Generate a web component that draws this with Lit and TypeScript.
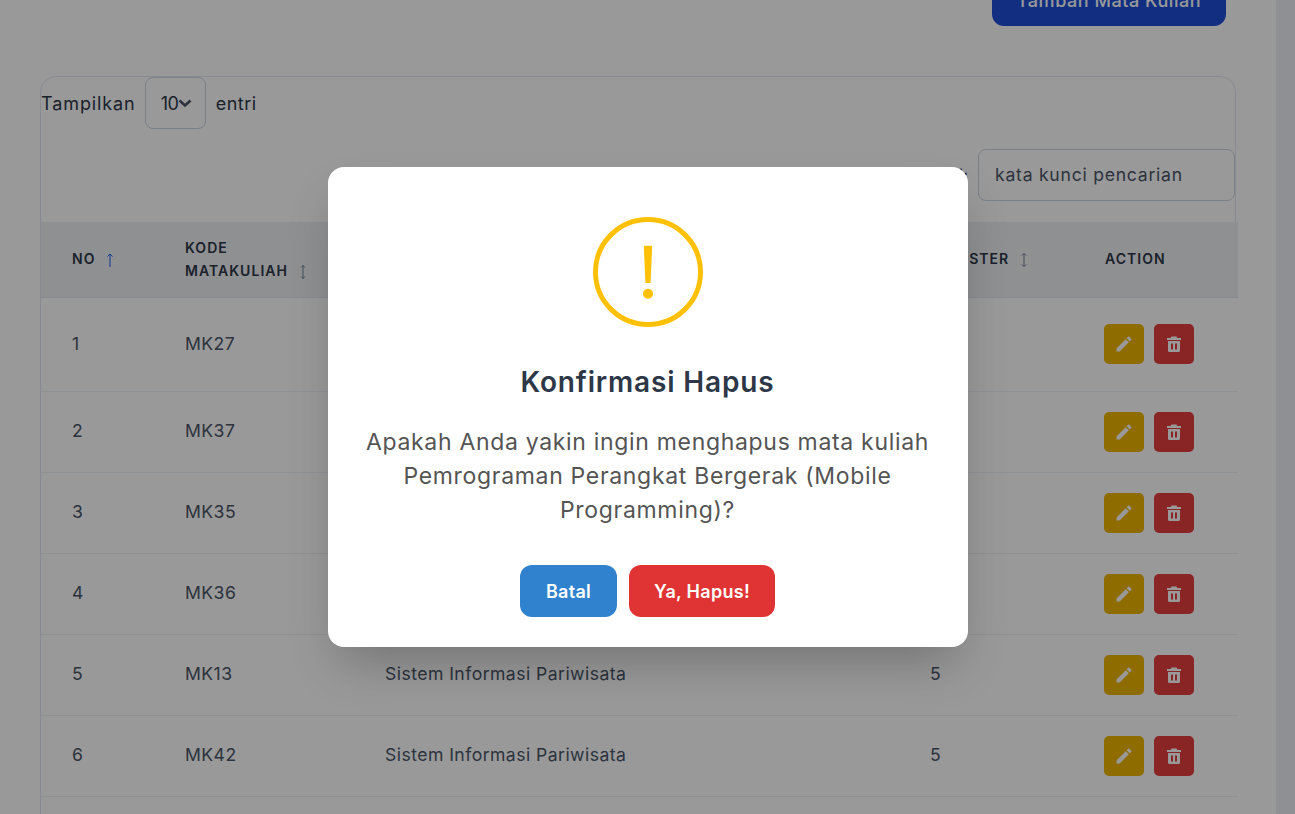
import { LitElement, css, html, svg } from 'lit'
import { customElement } from 'lit/decorators.js'

// the last row only has its top edge on screen, so it stays empty
const rows = [
  { no: '1', kode: 'MK27', nama: '', sem: '' },
  { no: '2', kode: 'MK37', nama: '', sem: '' },
  { no: '3', kode: 'MK35', nama: '', sem: '' },
  { no: '4', kode: 'MK36', nama: '', sem: '' },
  { no: '5', kode: 'MK13', nama: 'Sistem Informasi Pariwisata', sem: '5' },
  { no: '6', kode: 'MK42', nama: 'Sistem Informasi Pariwisata', sem: '5' },
  { no: '', kode: '', nama: '', sem: '' },
]

const pencil = svg`<path d="M3 17.25V21h3.75L17.81 9.94l-3.75-3.75L3 17.25zM20.71 7.04c.39-.39.39-1.02 0-1.41l-2.34-2.34c-.39-.39-1.02-.39-1.41 0l-1.83 1.83 3.75 3.75 1.83-1.83z"/>`
const trash = svg`<path fill-rule="evenodd" d="M4.5.5h5l.8 1.5H14v2H0V2h3.7zM1 5h12v9.5a1.5 1.5 0 0 1-1.5 1.5h-9A1.5 1.5 0 0 1 1 14.5zM4 7.5v6h2v-6zM8 7.5v6h2v-6z"/>`

@customElement('app-root')
export class AppRoot extends LitElement {
  static styles = css`
    :host {
      display: block;
      position: relative;
      height: 814px;
      overflow: hidden;
      background: #fff;
      font-family: Inter, "Liberation Sans", sans-serif;
      color: #2d3748;
    }
    .shell {
      display: flex;
      height: 814px;
    }
    .page {
      flex: 1;
      min-width: 0;
      margin-top: -26px;
      padding: 0 40px;
    }
    .scrollbar {
      width: 19px;
      background: #eef0f5;
    }
    .top {
      display: flex;
      justify-content: flex-end;
      padding-right: 10px;
      margin-bottom: 50px;
    }
    .add {
      width: 234px;
      height: 52px;
      border: 0;
      border-radius: 12px;
      background: #1d4ed8;
      color: #fff;
      font: 500 18px Inter, sans-serif;
      letter-spacing: 0.55px;
    }
    .card {
      width: 1194px;
      height: 900px;
      border: 1px solid #e2e8f0;
      border-radius: 16px;
    }
    .length {
      display: flex;
      align-items: center;
      height: 52px;
      font-size: 18px;
      letter-spacing: 0.9px;
    }
    .select {
      display: flex;
      align-items: center;
      box-sizing: border-box;
      width: 61px;
      height: 52px;
      margin: 0 10px 0 9px;
      padding-left: 15px;
      border: 1px solid #cbd5e0;
      border-radius: 8px;
      letter-spacing: -0.5px;
    }
    .select svg {
      width: 14px;
      height: 14px;
      fill: none;
      stroke: #4a5568;
      stroke-width: 2.6;
    }
    .entri {
      letter-spacing: 0.5px;
    }
    .search {
      display: flex;
      justify-content: flex-end;
      align-items: center;
      gap: 10px;
      margin-top: 20px;
      margin-bottom: 21px;
      font-size: 17.6px;
    }
    .input {
      box-sizing: border-box;
      width: 257px;
      height: 52px;
      padding-left: 16px;
      line-height: 49px;
      border: 1px solid #cbd5e0;
      border-radius: 8px;
      color: #4a5568;
      letter-spacing: 0.75px;
    }
    table {
      width: 1197px;
      border-collapse: collapse;
      table-layout: fixed;
      background: #fff;
    }
    th {
      height: 73px;
      padding: 0 0 2px 31px;
      background: #eff1f4;
      border-bottom: 1px solid #e2e8f0;
      text-align: left;
      font-size: 14px;
      line-height: 23px;
      font-weight: 600;
      letter-spacing: 1.04px;
    }
    th svg {
      width: 8px;
      height: 14px;
      margin-left: 6px;
      vertical-align: -3px;
      fill: none;
      stroke: #718096;
      stroke-width: 1;
    }
    th svg.active {
      stroke: #2563eb;
    }
    .sem {
      margin-left: -4px;
    }
    td {
      height: 77px;
      padding: 0 0 3px 31px;
      border-bottom: 1px solid #edf2f7;
      font-size: 17.6px;
      color: #4a5568;
      letter-spacing: 0.45px;
    }
    tr:first-child td {
      height: 90px;
    }
    td.act {
      padding: 0 0 0 30px;
    }
    tr:first-child td.act {
      padding-bottom: 1px;
    }
    .actions {
      display: flex;
      gap: 10px;
    }
    .btn {
      display: flex;
      align-items: center;
      justify-content: center;
      width: 40px;
      height: 40px;
      border-radius: 5px;
    }
    .edit svg {
      width: 20px;
      height: 20px;
      fill: #fff;
    }
    .del svg {
      width: 14px;
      height: 16px;
      fill: #fff;
    }
    .edit {
      background: #efb400;
    }
    .del {
      background: #e53e3e;
    }
    .overlay {
      position: absolute;
      inset: 0;
      display: flex;
      align-items: center;
      justify-content: center;
      background: rgba(0, 0, 0, 0.4);
    }
    .modal {
      box-sizing: border-box;
      width: 640px;
      height: 480px;
      padding-top: 50px;
      border-radius: 16px;
      background: #fff;
      box-shadow: 0 25px 50px -12px rgba(0, 0, 0, 0.25);
      text-align: center;
    }
    .icon {
      display: block;
      width: 110px;
      height: 110px;
      margin: 0 auto;
    }
    h2 {
      margin: 35px 0 0;
      font-size: 28px;
      line-height: 40px;
      font-weight: 600;
      letter-spacing: 0.84px;
    }
    p {
      width: 580px;
      margin: 23px auto 0;
      font-size: 23px;
      line-height: 34px;
      color: #545454;
      letter-spacing: 0.68px;
    }
    .buttons {
      display: flex;
      justify-content: center;
      gap: 12px;
      margin-top: 38px;
    }
    .buttons button {
      height: 52px;
      border: 0;
      border-radius: 12px;
      color: #fff;
      font: 600 18px Inter, sans-serif;
      letter-spacing: 0.3px;
    }
    .cancel {
      width: 97px;
      background: #3182ce;
    }
    .confirm {
      width: 146px;
      background: #e03333;
    }
  `

  sortIcon(active = false, up = false) {
    return html`<svg class=${active ? 'active' : ''} viewBox="0 0 8 14">
      <path d=${up ? 'M4 14V1M1.5 3.5L4 1l2.5 2.5' : 'M4 13.5V.5M2 2.5L4 .5l2 2M2 11.5l2 2 2-2'}></path>
    </svg>`
  }

  render() {
    return html`
      <div class="shell">
        <main class="page">
          <div class="top"><button class="add">Tambah Mata Kuliah</button></div>
          <section class="card">
            <div class="length">
              Tampilkan
              <div class="select">
                10<svg viewBox="0 0 14 14"><path d="M1.5 4.5l5.5 5 5.5-5"></path></svg>
              </div>
              <span class="entri">entri</span>
            </div>
            <div class="search">
              <span>Cari:</span>
              <div class="input">kata kunci pencarian</div>
            </div>
            <table>
              <colgroup>
                <col style="width:113px" /><col style="width:200px" /><col style="width:545px" /><col style="width:175px" /><col />
              </colgroup>
              <thead>
                <tr>
                  <th>NO ${this.sortIcon(true, true)}</th>
                  <th>KODE<br />MATAKULIAH ${this.sortIcon()}</th>
                  <th>MATA KULIAH ${this.sortIcon()}</th>
                  <th><div class="sem">SEMESTER ${this.sortIcon()}</div></th>
                  <th>ACTION</th>
                </tr>
              </thead>
              <tbody>
                ${rows.map(
                  (r) => html`<tr>
                    <td>${r.no}</td>
                    <td>${r.kode}</td>
                    <td>${r.nama}</td>
                    <td>${r.sem}</td>
                    <td class="act">
                      <div class="actions">
                        <div class="btn edit"><svg viewBox="0 0 24 24">${pencil}</svg></div>
                        <div class="btn del"><svg viewBox="0 0 14 16">${trash}</svg></div>
                      </div>
                    </td>
                  </tr>`
                )}
              </tbody>
            </table>
          </section>
        </main>
        <div class="scrollbar"></div>
      </div>
      <div class="overlay">
        <div class="modal">
          <svg class="icon" viewBox="0 0 110 110">
            <circle cx="55" cy="55" r="52.5" fill="none" stroke="#ffc107" stroke-width="5"></circle>
            <path d="M50.8 28.7h8.4l-1.6 37.3h-5.2z" fill="#ffc107"></path>
            <circle cx="55" cy="76.7" r="5" fill="#ffc107"></circle>
          </svg>
          <h2>Konfirmasi Hapus</h2>
          <p>Apakah Anda yakin ingin menghapus mata kuliah Pemrograman Perangkat Bergerak (Mobile Programming)?</p>
          <div class="buttons">
            <button class="cancel">Batal</button>
            <button class="confirm">Ya, Hapus!</button>
          </div>
        </div>
      </div>
    `
  }
}
